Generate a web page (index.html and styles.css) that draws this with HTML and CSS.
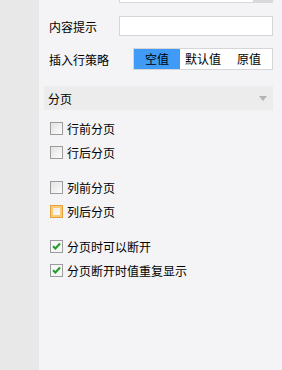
FILE: index.html
```html
<!DOCTYPE html>
<html lang="zh">
<head>
    <meta charset="UTF-8">
    <title>分页设置</title>
    <link rel="stylesheet" href="styles.css">
</head>
<body>
    <div class="sidebar"></div>
    <div class="panel">
        <!-- partly scrolled-out row -->
        <div class="row row-cut">
            <div class="label"></div>
            <div class="input short"></div>
            <div class="drop-btn"></div>
        </div>
        <div class="row row-hint">
            <div class="label">内容提示</div>
            <div class="input"></div>
        </div>
        <div class="row row-insert">
            <div class="label label-wide">插入行策略</div>
            <div class="segment">
                <span class="seg-item active">空值</span>
                <span class="seg-item">默认值</span>
                <span class="seg-item">原值</span>
            </div>
        </div>

        <div class="section-head">
            <span>分页</span>
            <span class="arrow"></span>
        </div>

        <div class="group">
            <label class="check"><span class="box"></span>行前分页</label>
            <label class="check"><span class="box"></span>行后分页</label>
        </div>
        <div class="group">
            <label class="check"><span class="box"></span>列前分页</label>
            <label class="check"><span class="box hover"></span>列后分页</label>
        </div>
        <div class="group">
            <label class="check"><span class="box checked"><svg width="9" height="8" viewBox="0 0 9 8"><path d="M1 4.2 L3.4 6.5 L8 1.5" fill="none" stroke="#1f9c2b" stroke-width="2"/></svg></span>分页时可以断开</label>
            <label class="check"><span class="box checked"><svg width="9" height="8" viewBox="0 0 9 8"><path d="M1 4.2 L3.4 6.5 L8 1.5" fill="none" stroke="#1f9c2b" stroke-width="2"/></svg></span>分页断开时值重复显示</label>
        </div>
    </div>
</body>
</html>
```

FILE: styles.css
```css
html, body {
    height: 100%;
}

body {
    margin: 0;
    display: flex;
    font-family: "Noto Sans CJK SC", "Microsoft YaHei", sans-serif;
    font-size: 12px;
    color: #000;
    overflow: hidden;
}

.sidebar {
    width: 39px;
    flex-shrink: 0;
    background-color: #e8e8e8;
}

.panel {
    flex: 1;
    background-color: #f4f4f6;
    padding: 0 9px 0 5px;
}

.row {
    display: flex;
    align-items: center;
}

.label {
    width: 70px;
    padding-left: 5px;
    flex-shrink: 0;
}

.label-wide {
    width: 84px;
}

.input {
    flex: 1;
    height: 18px;
    background-color: #fff;
    border: 1px solid #d6d6d8;
}

.row-cut {
    margin-top: -17px;
}

.input.short {
    border-right: none;
}

.drop-btn {
    width: 20px;
    height: 20px;
    background-color: #d9d9db;
}

.row-hint {
    margin-top: 13px;
}

.row-insert {
    margin-top: 12px;
}

.segment {
    flex: 1;
    display: flex;
    height: 20px;
    background-color: #fff;
    border: 1px solid #d6d6d8;
}

.seg-item {
    flex: 1;
    text-align: center;
    line-height: 20px;
}

.seg-item.active {
    background-color: #3f9bf6;
}

.section-head {
    margin-top: 16px;
    height: 24px;
    background-color: #ececec;
    display: flex;
    align-items: center;
    justify-content: space-between;
    padding: 0 6px 0 4px;
}

.arrow {
    width: 0;
    height: 0;
    border-left: 4px solid transparent;
    border-right: 4px solid transparent;
    border-top: 5px solid #b4b4b4;
}

.group {
    margin-top: 6px;
    margin-bottom: 5px;
}

.group + .group {
    margin-top: 11px;
}

.check {
    display: flex;
    align-items: center;
    height: 24px;
    padding-left: 6px;
}

.box {
    width: 11px;
    height: 11px;
    margin-right: 4px;
    border: 1px solid #9c9c9c;
    background: linear-gradient(135deg, #e2e2e2, #fdfdfd);
    display: flex;
    align-items: center;
    justify-content: center;
}

.box.hover {
    border-color: #e3a13f;
    box-shadow: inset 0 0 0 2px #fbcb74;
    background: linear-gradient(135deg, #e6e6e6, #ffffff);
}

.box.checked {
    background: #f6f6f6;
}
```
